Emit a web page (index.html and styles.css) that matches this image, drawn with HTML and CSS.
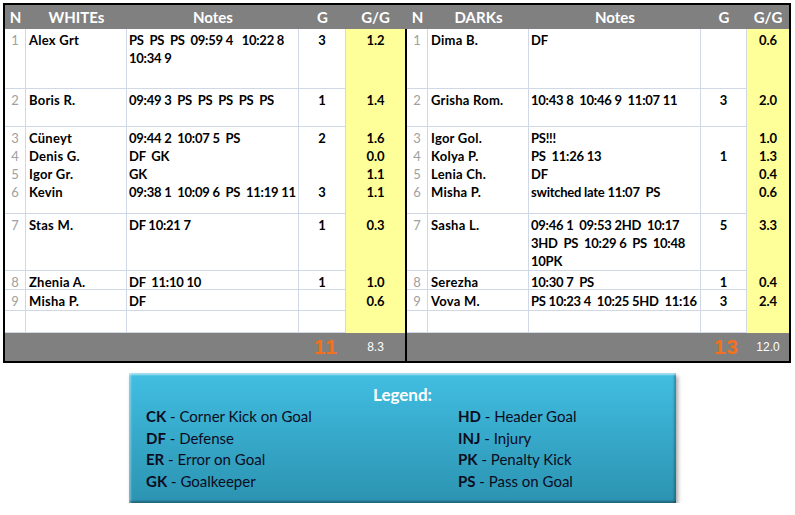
FILE: index.html
```html
<!DOCTYPE html>
<html>
<head>
<meta charset="utf-8">
<link rel="stylesheet" href="styles.css">
</head>
<body>
<div class="sheet">
  <div class="divider"></div>
  <!-- header -->
  <div class="h">N</div><div class="h">WHITEs</div><div class="h">Notes</div><div class="h">G</div><div class="h">G/G</div>
  <div class="h hdiv"></div>
  <div class="h">N</div><div class="h">DARKs</div><div class="h">Notes</div><div class="h">G</div><div class="h">G/G</div>

  <!-- row 1 -->
  <div class="c n">1</div><div class="c nm">Alex Grt</div><div class="c nt">PS  PS  PS  09:59 4   10:22 8<br>10:34 9</div><div class="c g">3</div><div class="y">1.2</div>
  <div class="c n">1</div><div class="c nm">Dima B.</div><div class="c nt">DF</div><div class="c g"></div><div class="y">0.6</div>
  <!-- row 2 -->
  <div class="c n">2</div><div class="c nm">Boris R.</div><div class="c nt">09:49 3  PS  PS  PS  PS  PS</div><div class="c g">1</div><div class="y">1.4</div>
  <div class="c n">2</div><div class="c nm">Grisha Rom.</div><div class="c nt">10:43 8  10:46 9  11:07 11</div><div class="c g">3</div><div class="y">2.0</div>
  <!-- row 3 -->
  <div class="c n nb">3</div><div class="c nm nb">Cüneyt</div><div class="c nt nb">09:44 2  10:07 5  PS</div><div class="c g nb">2</div><div class="y">1.6</div>
  <div class="c n nb">3</div><div class="c nm nb">Igor Gol.</div><div class="c nt nb">PS!!!</div><div class="c g nb"></div><div class="y">1.0</div>
  <!-- row 4 -->
  <div class="c n nb">4</div><div class="c nm nb">Denis G.</div><div class="c nt nb">DF  GK</div><div class="c g nb"></div><div class="y">0.0</div>
  <div class="c n nb">4</div><div class="c nm nb">Kolya P.</div><div class="c nt nb">PS  11:26 13</div><div class="c g nb">1</div><div class="y">1.3</div>
  <!-- row 5 -->
  <div class="c n nb">5</div><div class="c nm nb">Igor Gr.</div><div class="c nt nb">GK</div><div class="c g nb"></div><div class="y">1.1</div>
  <div class="c n nb">5</div><div class="c nm nb">Lenia Ch.</div><div class="c nt nb">DF</div><div class="c g nb"></div><div class="y">0.4</div>
  <!-- row 6 -->
  <div class="c n">6</div><div class="c nm">Kevin</div><div class="c nt">09:38 1  10:09 6  PS  11:19 11</div><div class="c g">3</div><div class="y">1.1</div>
  <div class="c n">6</div><div class="c nm">Misha P.</div><div class="c nt">switched late 11:07  PS</div><div class="c g"></div><div class="y">0.6</div>
  <!-- row 7 -->
  <div class="c n">7</div><div class="c nm">Stas M.</div><div class="c nt">DF 10:21 7</div><div class="c g">1</div><div class="y">0.3</div>
  <div class="c n">7</div><div class="c nm">Sasha L.</div><div class="c nt">09:46 1  09:53 2HD  10:17<br>3HD  PS  10:29 6  PS  10:48<br>10PK</div><div class="c g">5</div><div class="y">3.3</div>
  <!-- row 8 -->
  <div class="c n">8</div><div class="c nm">Zhenia A.</div><div class="c nt">DF  11:10 10</div><div class="c g">1</div><div class="y">1.0</div>
  <div class="c n">8</div><div class="c nm">Serezha</div><div class="c nt">10:30 7  PS</div><div class="c g">1</div><div class="y">0.4</div>
  <!-- row 9 -->
  <div class="c n">9</div><div class="c nm">Misha P.</div><div class="c nt">DF</div><div class="c g"></div><div class="y">0.6</div>
  <div class="c n">9</div><div class="c nm">Vova M.</div><div class="c nt">PS 10:23 4  10:25 5HD  11:16</div><div class="c g">3</div><div class="y">2.4</div>
  <!-- empty row -->
  <div class="c n"></div><div class="c nm"></div><div class="c nt"></div><div class="c g"></div><div class="y"></div>
  <div class="c n"></div><div class="c nm"></div><div class="c nt"></div><div class="c g"></div><div class="y"></div>
  <!-- footer -->
  <div class="f fspan"></div><div class="f ftot">11</div><div class="f favg">8.3</div>
  <div class="f fspan"></div><div class="f ftot">13</div><div class="f favg">12.0</div>
</div>

<div class="legend">
  <div class="legend-title">Legend:</div>
  <div class="legend-grid">
    <div><b>CK</b> - Corner Kick on Goal</div><div><b>HD</b> - Header Goal</div>
    <div><b>DF</b> - Defense</div><div><b>INJ</b> - Injury</div>
    <div><b>ER</b> - Error on Goal</div><div><b>PK</b> - Penalty Kick</div>
    <div><b>GK</b> - Goalkeeper</div><div><b>PS</b> - Pass on Goal</div>
  </div>
</div>
</body>
</html>
```
FILE: styles.css
```css
* { box-sizing: border-box; }
body {
  margin: 0;
  background: #fff;
  font-family: Lato, "Liberation Sans", sans-serif;
}
.sheet {
  margin: 3px 0 0 3px;
  width: 788px;
  border: 2px solid #000;
  display: grid;
  grid-template-columns: 21px 101px 172px 47px 59px 2px 21px 101px 172px 46px 42px;
  grid-template-rows: 24px 60px 38px 18px 18px 18px 33px 57px 19px 21px 22px 28px;
  font-size: 13px;
  font-weight: 700;
  color: #000;
}
.divider {
  grid-column: 6;
  grid-row: 2 / 13;
  background: #000;
}
.h {
  background: #808080;
  color: #fff;
  font-size: 15px;
  text-align: center;
  line-height: 25px;
}
.c {
  border-right: 1px solid #d0d7e5;
  border-bottom: 1px solid #d0d7e5;
  line-height: 18px;
  padding-top: 2px;
  overflow-x: clip;
  overflow-y: visible;
  white-space: pre;
}
.c.nb { border-bottom: none; }
.n {
  color: #a0a0a0;
  font-weight: 400;
  text-align: center;
}
.nm { padding-left: 3px; letter-spacing: 0.25px; }
.nt { padding-left: 2px; letter-spacing: -0.25px; }
.g { text-align: center; }
.y {
  background: #ffff99;
  text-align: center;
  line-height: 18px;
  padding-top: 2px;
}
.f {
  background: #808080;
  color: #fff;
}
.fspan { grid-column: span 3; }
.ftot {
  color: #f2701e;
  font-family: "Liberation Sans", Arial, sans-serif;
  font-weight: 700;
  font-size: 21px;
  letter-spacing: 1px;
  text-align: right;
  padding-right: 8px;
  line-height: 28px;
}
.favg {
  font-family: "Liberation Sans", Arial, sans-serif;
  font-weight: 400;
  font-size: 12px;
  text-align: center;
  line-height: 28px;
}
.legend {
  margin: 10px 0 0 129px;
  width: 547px;
  height: 130px;
  background: linear-gradient(#41bee2, #2c93b1);
  box-shadow:
    inset 0 3px 2px -1px rgba(255,255,255,0.55),
    inset 3px 0 2px -1px rgba(255,255,255,0.35),
    inset -3px 0 2px -1px rgba(0,0,0,0.25),
    inset 0 -3px 2px -1px rgba(0,0,0,0.3),
    2px 3px 4px rgba(0,0,0,0.35);
  padding: 12px 0 0 17px;
  color: #0c0c1e;
}
.legend-title {
  text-align: center;
  color: #fff;
  font-weight: 700;
  font-size: 17px;
  line-height: 20px;
  padding-right: 17px;
}
.legend-grid {
  display: grid;
  grid-template-columns: 312px auto;
  font-size: 15px;
  line-height: 21.5px;
  padding-top: 1px;
}
.legend-grid b { font-weight: 700; }
```
